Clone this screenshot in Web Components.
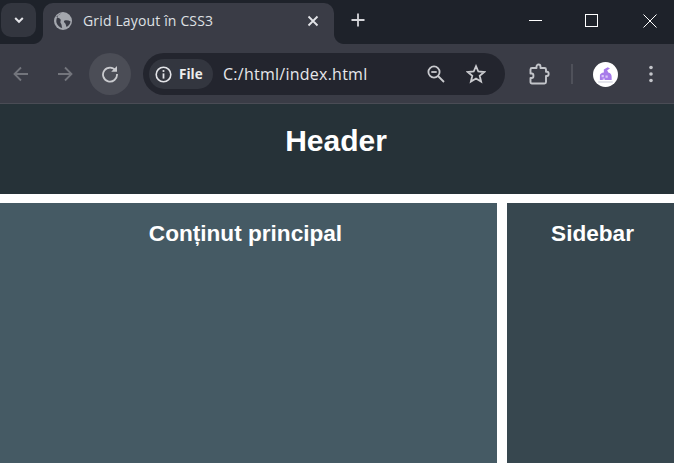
<!DOCTYPE html>
<html>
<head>
<meta charset="utf-8">
<title>Grid Layout în CSS3</title>
<style>
    html, body { margin: 0; padding: 0; background: #fff; }
    body { width: 674px; height: 463px; overflow: hidden; font-family: "Liberation Sans", Arial, sans-serif; }
</style>
</head>
<body>
<browser-chrome></browser-chrome>
<grid-page>
    <grid-area slot="header" kind="header"><h1 style="margin:0;font-size:30px;line-height:34px">Header</h1></grid-area>
    <grid-area slot="main" kind="main"><h2 style="margin:0;font-size:22.6px;line-height:26px">Conținut principal</h2></grid-area>
    <grid-area slot="aside" kind="aside"><h2 style="margin:0;font-size:22.6px;line-height:26px">Sidebar</h2></grid-area>
</grid-page>

<template id="browser-chrome-template">
    <style>
        :host { display: block; font-family: "Open Sans", "Noto Sans", sans-serif; color: #e3e4e8; }
        svg { display: block; }
        .strip {
            height: 44px;
            background: #1e222a;
            display: flex;
            align-items: flex-start;
        }
        .tabs-btn {
            width: 35px; height: 34px;
            margin: 3px 0 0 1px;
            border-radius: 10px;
            background: #33363f;
            display: flex; align-items: center; justify-content: center;
        }
        .tab {
            position: relative;
            width: 291px; height: 41px;
            margin: 3px 0 0 7px;
            box-sizing: border-box;
            padding: 0 15px 6px 11px;
            background: #3a3c46;
            border-radius: 10px 10px 0 0;
            display: flex; align-items: center;
        }
        /* flared corners at the foot of the tab */
        .tab::before, .tab::after {
            content: "";
            position: absolute;
            bottom: 0;
            width: 10px; height: 10px;
            background: radial-gradient(circle at var(--cx) 0, #1e222a 9.5px, #3a3c46 10.5px);
        }
        .tab::before { left: -10px; --cx: 0; }
        .tab::after { right: -10px; --cx: 10px; }
        .title { flex: 1; font-size: 14px; letter-spacing: 0.15px; margin-left: 11px; color: #dfe0e4; white-space: nowrap; }
        .plus { margin: 13px 0 0 17px; }
        .win { margin-left: auto; display: flex; }
        .win div { box-sizing: border-box; height: 41px; display: flex; align-items: center; justify-content: center; }
        .win .min { width: 58px; padding-left: 11px; }
        .win .max { width: 57px; padding-left: 8px; }
        .win .close { width: 58px; padding-left: 9px; }
        .toolbar {
            height: 60px;
            box-sizing: border-box;
            background: #3a3c46;
            border-bottom: 1px solid #4a4c55;
            display: flex;
            align-items: center;
            padding: 1px 0 0 0;
        }
        .nav { width: 44px; height: 44px; display: flex; align-items: center; justify-content: center; }
        .reload { border-radius: 50%; background: #4b4d56; margin-left: 1px; height: 42px; width: 42px; }
        .omni {
            width: 362px; height: 42px;
            margin-left: 12px;
            box-sizing: border-box;
            padding: 0 9px 0 6px;
            border-radius: 21px;
            background: #23252e;
            display: flex; align-items: center;
        }
        .chip {
            width: 64px; height: 30px;
            border-radius: 15px;
            background: #33363f;
            display: flex; align-items: center;
            box-sizing: border-box;
            padding-left: 6px;
            gap: 7px;
            font-size: 13.5px; font-weight: 700; color: #eceded;
        }
        .url { flex: 1; margin-left: 10px; font-size: 16px; letter-spacing: 0.25px; color: #e6e7ea; white-space: nowrap; }
        .omni-icon { width: 40px; display: flex; justify-content: center; }
        .ext { margin-left: 24px; }
        .sep { width: 2px; height: 20px; background: #4f515a; margin-left: 21px; }
        .avatar {
            width: 25px; height: 25px;
            margin-left: 20px;
            border-radius: 50%;
            background: #fff;
            display: flex; align-items: center; justify-content: center;
        }
        .dots { margin-left: 31px; }
    </style>
    <div class="strip">
        <div class="tabs-btn">
            <svg width="12" height="12" viewBox="0 0 12 12"><path d="M2.2 4 6 7.8 9.8 4" fill="none" stroke="#e3e4e8" stroke-width="2"/></svg>
        </div>
        <div class="tab">
            <svg width="18" height="18" viewBox="0 0 18 18">
                <circle cx="9" cy="9" r="9" fill="#a4a7ae"/>
                <path d="M7 1.2C6 3 3.5 3.4 2.4 4.6 3.4 6.4 5.8 6 6.6 7.4 7.2 8.8 5.6 9.8 6.8 11.2 7.8 12.2 7.6 14.2 8.2 16 6 15.6 3.4 13.6 2.6 11 1.6 7.6 3.6 2.6 7 1.2Z" fill="#3a3c46"/>
                <path d="M10.6 8.6C12.2 7.8 14.6 8.2 16.6 9.4 16.2 11.6 14.6 14 12.6 15 11.8 13.4 12 12 10.8 11 9.8 10.2 9.6 9.2 10.6 8.6Z" fill="#3a3c46"/>
            </svg>
            <span class="title">Grid Layout în CSS3</span>
            <svg width="12" height="12" viewBox="0 0 12 12"><path d="M1.5 1.5 10.5 10.5M10.5 1.5 1.5 10.5" stroke="#e3e4e8" stroke-width="1.8"/></svg>
        </div>
        <svg class="plus" width="14" height="14" viewBox="0 0 14 14"><path d="M7 0.5V13.5M0.5 7H13.5" stroke="#d5d6da" stroke-width="1.8"/></svg>
        <div class="win">
            <div class="min"><svg width="13" height="13" viewBox="0 0 13 13"><path d="M0 6.5H13" stroke="#fff" stroke-width="1"/></svg></div>
            <div class="max"><svg width="13" height="13" viewBox="0 0 13 13"><rect x="0.5" y="0.5" width="12" height="12" fill="none" stroke="#fff"/></svg></div>
            <div class="close"><svg width="14" height="14" viewBox="0 0 14 14"><path d="M0.5 0.5 13.5 13.5M13.5 0.5 0.5 13.5" stroke="#fff" stroke-width="1"/></svg></div>
        </div>
    </div>
    <div class="toolbar">
        <div class="nav" style="margin-left:-1px">
            <svg width="18" height="16" viewBox="0 0 18 16"><path d="M16 8H3M9 1.5 2.5 8 9 14.500" fill="none" stroke="#73757c" stroke-width="1.800"/></svg>
        </div>
        <div class="nav">
            <svg width="18" height="16" viewBox="0 0 18 16"><path d="M2 8H15M9 1.5 15.5 8 9 14.500" fill="none" stroke="#73757c" stroke-width="1.800"/></svg>
        </div>
        <div class="nav reload" style="margin-left:2px">
            <svg width="18" height="18" viewBox="0 0 18 18"><path d="M14.800 5.600A7 7 0 1 0 16 9" fill="none" stroke="#c9cace" stroke-width="1.800"/><path d="M16 1V6.800H10.200Z" fill="#c9cace"/></svg>
        </div>
        <div class="omni">
            <div class="chip">
                <svg width="17" height="17" viewBox="0 0 17 17"><circle cx="8.500" cy="8.500" r="7.300" fill="none" stroke="#e3e4e8" stroke-width="1.600"/><path d="M8.500 7.400V12.600" stroke="#e3e4e8" stroke-width="1.800"/><circle cx="8.500" cy="5" r="1.100" fill="#e3e4e8"/></svg>
                <span>File</span>
            </div>
            <span class="url">C:/html/index.html</span>
            <div class="omni-icon">
                <svg width="18" height="18" viewBox="0 0 18 18"><circle cx="7" cy="7" r="5.600" fill="none" stroke="#c9cace" stroke-width="1.800"/><path d="M4.300 7H9.700" stroke="#c9cace" stroke-width="1.800"/><path d="M11 11 17 17" stroke="#c9cace" stroke-width="1.800"/></svg>
            </div>
            <div class="omni-icon">
                <svg width="20" height="20" viewBox="0 0 20 20"><path d="M10 2.200 12.300 7.500 18.200 8 13.700 11.800 15.100 17.600 10 14.500 4.900 17.600 6.300 11.800 1.800 8 7.700 7.500Z" fill="none" stroke="#c9cace" stroke-width="1.800"/></svg>
            </div>
        </div>
        <div class="ext">
            <svg width="21" height="22" viewBox="0 0 21 22"><path d="M3 5H7.500V3.800C7.500 0.800 11.500 0.800 11.500 3.800V5H15.500C16.500 5 17 5.500 17 6.500V8.800H18C20.200 8.800 20.200 13 18 13H17V19C17 20 16.500 20.500 15.500 20.500H3C2 20.500 1.500 20 1.500 19V15H2.800C5 15 5 10.500 2.800 10.500H1.500V6.500C1.500 5.500 2 5 3 5Z" fill="none" stroke="#c3c5ca" stroke-width="1.900" stroke-linejoin="round"/></svg>
        </div>
        <div class="sep"></div>
        <div class="avatar">
            <svg width="19" height="19" viewBox="0 0 17 17">
                <path d="M3.500 13.500V9.500C3.500 7.800 5.200 7 7 6.800V4L10.500 2 12.500 3.200 10 4.800 11 6.800C13 7.300 14 8.500 14 10.500V13.500Z" fill="#a77bea"/>
                <path d="M5 9H7V11H5ZM8.500 9.500H10.500V11.500H8.500ZM6 12H8V13.500H6Z" fill="#d9c6f7"/>
                <path d="M2 15.200H15" stroke="#b9bbd0" stroke-width="0.700"/>
            </svg>
        </div>
        <div class="dots">
            <svg width="4" height="18" viewBox="0 0 4 18"><circle cx="2" cy="2.500" r="1.800" fill="#c3c5ca"/><circle cx="2" cy="9" r="1.800" fill="#c3c5ca"/><circle cx="2" cy="15.500" r="1.800" fill="#c3c5ca"/></svg>
        </div>
    </div>
</template>

<template id="grid-page-template">
    <style>
        :host {
            display: grid;
            grid-template-columns: 497px 167px;
            grid-template-rows: 90px 260px;
            column-gap: 10px;
            row-gap: 9px;
            width: 674px;
        }
        ::slotted([slot="header"]) { grid-column: 1 / 3; width: 674px; }
        ::slotted([slot="aside"]) { width: 167px; }
    </style>
    <slot name="header"></slot>
    <slot name="main"></slot>
    <slot name="aside"></slot>
</template>

<template id="grid-area-template">
    <style>
        :host {
            display: block;
            box-sizing: border-box;
            color: #fff;
            text-align: center;
            padding-top: 18px;
        }
        :host([kind="header"]) { background: #263238; padding: 20px 2px 0 0; }
        :host([kind="main"]) { background: #455a64; padding-right: 6px; }
        :host([kind="aside"]) { background: #37474f; padding-left: 4px; }
    </style>
    <slot></slot>
</template>

<script>
    // every element just clones its own template into an open shadow root
    function register(tag, templateId) {
        customElements.define(tag, class extends HTMLElement {
            constructor() {
                super();
                const t = document.getElementById(templateId);
                this.attachShadow({ mode: 'open' }).appendChild(t.content.cloneNode(true));
            }
        });
    }
    register('browser-chrome', 'browser-chrome-template');
    register('grid-page', 'grid-page-template');
    register('grid-area', 'grid-area-template');
</script>
</body>
</html>
